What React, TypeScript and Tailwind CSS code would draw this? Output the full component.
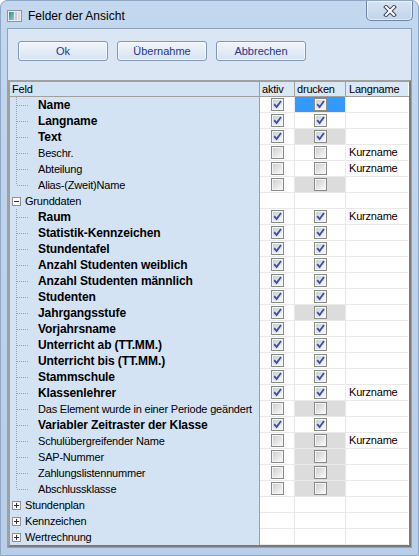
import React from 'react'

type Row = {
  label: string
  kind: 'child' | 'group'
  bold?: boolean
  last?: boolean
  open?: boolean
  aktiv?: boolean
  drucken?: boolean
  gray?: boolean
  selected?: boolean
  lang?: string
}

const rows: Row[] = [
  { label: 'Name', kind: 'child', bold: true, aktiv: true, drucken: true, selected: true },
  { label: 'Langname', kind: 'child', bold: true, aktiv: true, drucken: true },
  { label: 'Text', kind: 'child', bold: true, aktiv: true, drucken: true, gray: true },
  { label: 'Beschr.', kind: 'child', aktiv: false, drucken: false, lang: 'Kurzname' },
  { label: 'Abteilung', kind: 'child', aktiv: false, drucken: false, lang: 'Kurzname' },
  { label: 'Alias-(Zweit)Name', kind: 'child', last: true, aktiv: false, drucken: false, gray: true },
  { label: 'Grunddaten', kind: 'group', open: true },
  { label: 'Raum', kind: 'child', bold: true, aktiv: true, drucken: true, lang: 'Kurzname' },
  { label: 'Statistik-Kennzeichen', kind: 'child', bold: true, aktiv: true, drucken: true },
  { label: 'Stundentafel', kind: 'child', bold: true, aktiv: true, drucken: true },
  { label: 'Anzahl Studenten weiblich', kind: 'child', bold: true, aktiv: true, drucken: true },
  { label: 'Anzahl Studenten männlich', kind: 'child', bold: true, aktiv: true, drucken: true },
  { label: 'Studenten', kind: 'child', bold: true, aktiv: true, drucken: true },
  { label: 'Jahrgangsstufe', kind: 'child', bold: true, aktiv: true, drucken: true, gray: true },
  { label: 'Vorjahrsname', kind: 'child', bold: true, aktiv: true, drucken: true },
  { label: 'Unterricht ab (TT.MM.)', kind: 'child', bold: true, aktiv: true, drucken: true },
  { label: 'Unterricht bis (TT.MM.)', kind: 'child', bold: true, aktiv: true, drucken: true },
  { label: 'Stammschule', kind: 'child', bold: true, aktiv: true, drucken: true },
  { label: 'Klassenlehrer', kind: 'child', bold: true, aktiv: true, drucken: true, lang: 'Kurzname' },
  { label: 'Das Element wurde in einer Periode geändert', kind: 'child', aktiv: false, drucken: false, gray: true },
  { label: 'Variabler Zeitraster der Klasse', kind: 'child', bold: true, aktiv: true, drucken: true },
  { label: 'Schulübergreifender Name', kind: 'child', aktiv: false, drucken: false, gray: true, lang: 'Kurzname' },
  { label: 'SAP-Nummer', kind: 'child', aktiv: false, drucken: false, gray: true },
  { label: 'Zahlungslistennummer', kind: 'child', aktiv: false, drucken: false, gray: true },
  { label: 'Abschlussklasse', kind: 'child', last: true, aktiv: false, drucken: false, gray: true },
  { label: 'Stundenplan', kind: 'group' },
  { label: 'Kennzeichen', kind: 'group' },
  { label: 'Wertrechnung', kind: 'group' },
]

function CheckBox({ on }: { on: boolean }) {
  return (
    <span className="relative flex h-[13px] w-[13px] items-center justify-center border border-[#8a8a8a] bg-[#f4f4f4]">
      <span className="h-[9px] w-[9px] bg-linear-to-br from-[#cfcfcf] to-[#f8f8f8]" />
      {on && (
        <svg width="11" height="11" viewBox="0 0 11 11" className="absolute left-0 top-0">
          <path d="M2.2 5.2 L4.6 8 L9 2" fill="none" stroke="#3550a8" strokeWidth="1.8" />
        </svg>
      )}
    </span>
  )
}

function TreeLines({ last }: { last?: boolean }) {
  return (
    <svg width="28" height="16" className="shrink-0">
      <line x1="6.5" y1="0" x2="6.5" y2={last ? 8 : 16} stroke="#a0a0a0" strokeDasharray="1 1" />
      <line x1="7" y1="8.5" x2="19" y2="8.5" stroke="#a0a0a0" strokeDasharray="1 1" />
    </svg>
  )
}

function Expander({ open }: { open?: boolean }) {
  return (
    <svg width="15" height="16" className="shrink-0">
      <rect x="2.5" y="4.5" width="8" height="8" fill="#fbfbfb" stroke="#919191" />
      <line x1="4" y1="8.5" x2="9" y2="8.5" stroke="#333" />
      {!open && <line x1="6.5" y1="6" x2="6.5" y2="11" stroke="#333" />}
    </svg>
  )
}

function GridRow({ row }: { row: Row }) {
  const hasBoxes = row.aktiv !== undefined
  return (
    <div className="flex h-[16px]">
      <div className="flex w-[250px] items-center border-r border-[#a0a0a0] bg-[#d4e3f3]">
        {row.kind === 'child' ? <TreeLines last={row.last} /> : <Expander open={row.open} />}
        <span
          className={
            row.bold
              ? 'whitespace-nowrap text-[12px] font-bold tracking-[-0.1px] text-black'
              : 'whitespace-nowrap text-[11px] tracking-[-0.2px] text-black'
          }
        >
          {row.label}
        </span>
      </div>
      <div className="flex w-[35px] items-center justify-center border-r border-b border-[#e9e9e9] bg-white">
        {hasBoxes && <CheckBox on={!!row.aktiv} />}
      </div>
      <div
        className={
          'flex w-[51px] items-center justify-center border-r border-b border-[#e9e9e9] ' +
          (row.selected ? 'bg-[#3399ff]' : row.gray ? 'bg-[#dcdcdc]' : 'bg-white')
        }
      >
        {hasBoxes && <CheckBox on={!!row.drucken} />}
      </div>
      <div className="flex w-[62px] items-center border-b border-[#e9e9e9] bg-white pl-[3px] text-[11px] tracking-[-0.2px] text-black">
        {row.lang}
      </div>
    </div>
  )
}

function WinButton({ label }: { label: string }) {
  return (
    <button className="flex h-[20px] w-[90px] items-center justify-center rounded-[3px] border border-[#8296b6] bg-linear-to-b from-[#f1f5fb] to-[#d7e3f2] text-[11px] text-[#22378c] shadow-[inset_0_0_0_1px_rgba(255,255,255,0.6)]">
      {label}
    </button>
  )
}

export default function App() {
  return (
    <div className="h-[556px] w-[419px] overflow-hidden rounded-t-[7px] border border-[#8fa7c5] bg-linear-to-b from-[#c3d7ee] via-[#bcd2eb] to-[#b8cee9] font-['Liberation_Sans',Arial,sans-serif]">
      {/* Title bar */}
      <div className="flex h-[27px] items-center">
        <svg width="15" height="12" className="ml-[6px] mt-[3px] shrink-0">
          <defs>
            <linearGradient id="ic" x1="0" y1="0" x2="1" y2="1">
              <stop offset="0" stopColor="#2b8f7c" />
              <stop offset="1" stopColor="#8fc8ec" />
            </linearGradient>
          </defs>
          <rect x="0.5" y="0.5" width="14" height="11" fill="#e9ecef" stroke="#8c96a2" />
          <rect x="2" y="2" width="5" height="8" fill="url(#ic)" />
          <rect x="8" y="2" width="2" height="8" fill="#c5cbd2" />
          <rect x="11" y="2" width="2" height="8" fill="#d8dde2" />
        </svg>
        <span className="ml-[6px] mt-[3px] text-[12px] text-black">Felder der Ansicht</span>
        <div className="ml-auto mr-[5px] flex h-[20px] w-[47px] self-start items-center justify-center rounded-b-[5px] border border-t-0 border-[#6f85a5] bg-linear-to-b from-[#d6e3f2] to-[#c2d4ea] shadow-[inset_0_0_0_1px_rgba(255,255,255,0.5)]">
          <svg width="14" height="12" viewBox="0 0 14 12">
            <path d="M3 2 L11 10 M11 2 L3 10" stroke="#3d4a5c" strokeWidth="4" strokeLinecap="square" />
            <path d="M3 2 L11 10 M11 2 L3 10" stroke="#ffffff" strokeWidth="2" strokeLinecap="square" />
          </svg>
        </div>
      </div>

      {/* Client area */}
      <div className="mx-[6px] flex h-[520px] flex-col border border-[#8ca3c0] bg-[#dae6f4]">
        <div className="flex gap-[9px] pl-[10px] pt-[12px]">
          <WinButton label="Ok" />
          <WinButton label="Übernahme" />
          <WinButton label="Abbrechen" />
        </div>

        <div className="mt-[19px] border-2 border-t-[#a0a0a0] border-l-[#a0a0a0] border-r-[#7a7a7a] border-b-[#7a7a7a] bg-white">
          {/* header */}
          <div className="flex h-[15px] border-b border-[#a0a0a0] text-[11px] tracking-[-0.2px] text-black">
            <div className="flex w-[250px] items-center border-r border-[#a0a0a0] bg-[#d4e3f3] pl-[2px]">Feld</div>
            <div className="flex w-[35px] items-center border-r border-[#a0a0a0] bg-[#dae7f5] pl-[2px]">aktiv</div>
            <div className="flex w-[51px] items-center border-r border-[#a0a0a0] bg-[#dae7f5] pl-[2px]">drucken</div>
            <div className="flex w-[62px] items-center bg-[#dae7f5] pl-[3px]">Langname</div>
          </div>
          {rows.map((r) => (
            <GridRow key={r.label} row={r} />
          ))}
        </div>
      </div>
    </div>
  )
}
